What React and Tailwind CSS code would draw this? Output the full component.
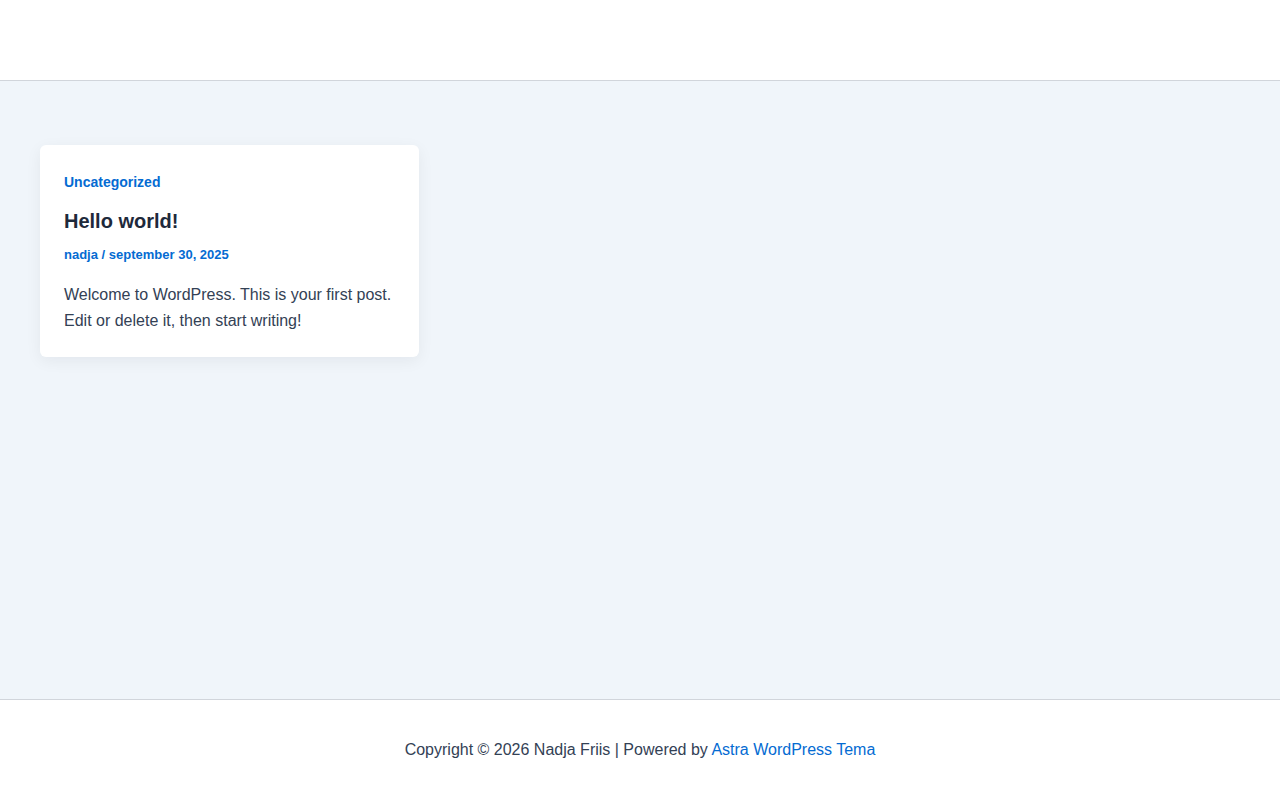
export default function App() {
  const font = { fontFamily: '"Liberation Sans", Arial, sans-serif' };
  return (
    <div className="min-h-screen bg-white text-[#334155]" style={font}>
      {/* site header */}
      <header className="h-[81px] border-b border-[#d1d5db] bg-white" />

      {/* post grid */}
      <main className="min-h-[618px] bg-[#f0f5fa] px-10 pt-16">
        <article className="w-[379px] rounded-md bg-white px-6 pt-6 pb-[23px] shadow-[0_4px_16px_rgba(15,23,42,0.06)]">
          <a href="#" className="block text-[14px] font-bold leading-[26px] text-[#046bd2]">
            Uncategorized
          </a>
          <h2 className="mt-3 text-[20px] font-bold leading-[28px] text-[#1e293b]">
            Hello world!
          </h2>
          <div className="mt-[9px] text-[13px] font-bold leading-[22px] text-[#046bd2]">
            <a href="#">nadja</a> / <span>september 30, 2025</span>
          </div>
          <p className="mt-4 text-[16px] leading-[26px] text-[#334155]">
            Welcome to WordPress. This is your first post. Edit or delete it, then start writing!
          </p>
        </article>
      </main>

      {/* site footer */}
      <footer className="h-[101px] border-t border-[#d1d5db] bg-white pt-[37px] text-center text-[16px] leading-[26px] text-[#334155]">
        Copyright © 2026 Nadja Friis | Powered by{" "}
        <a href="#" className="text-[#046bd2]">
          Astra WordPress Tema
        </a>
      </footer>
    </div>
  );
}
